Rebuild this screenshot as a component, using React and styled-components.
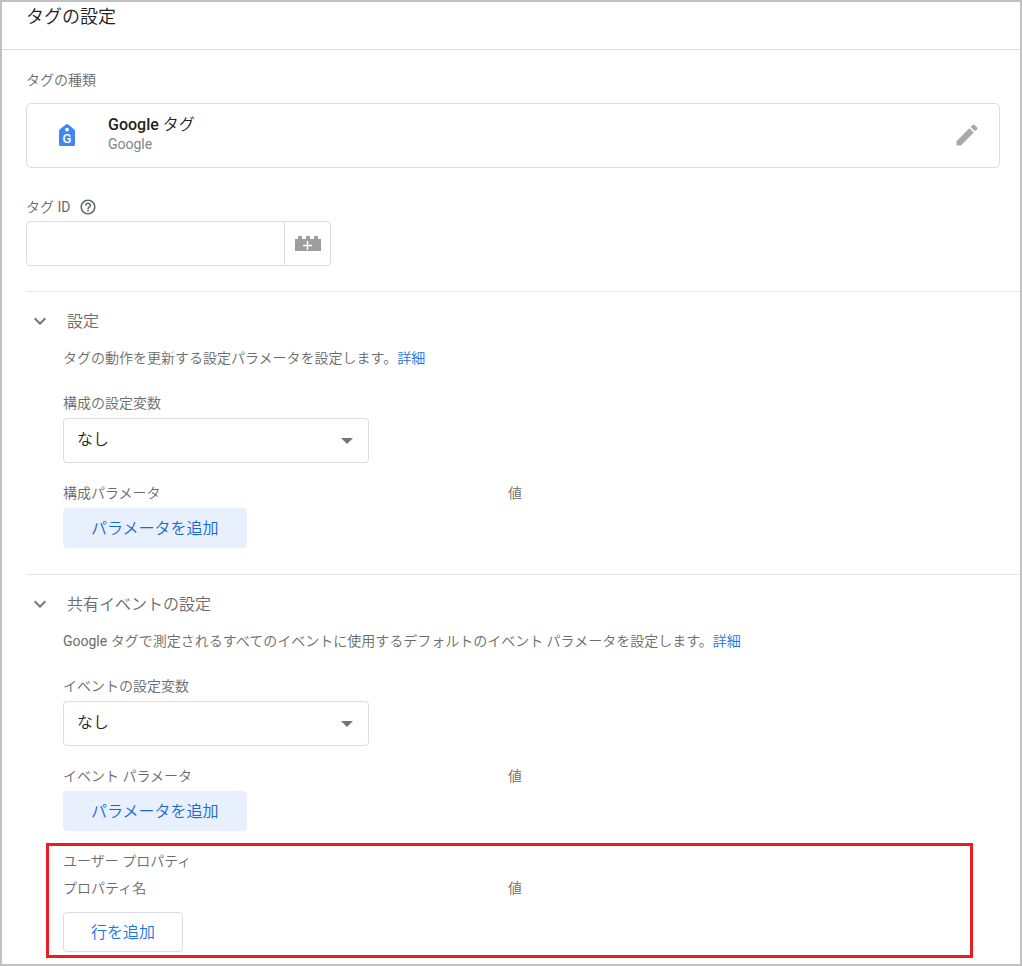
import React, { useState } from "react";
import styled, { createGlobalStyle } from "styled-components";

const VariableSelect = ({ id, label }) => {
  const [value, setValue] = useState("none");

  return (
    <>
      <Label htmlFor={id}>{label}</Label>
      <SelectWrapper>
        <Select
          id={id}
          value={value}
          onChange={(e) => setValue(e.target.value)}
        >
          <option value="none">なし</option>
        </Select>
        <SelectArrow viewBox="0 0 12 6">
          <path d="M0 0h12L6 6z" />
        </SelectArrow>
      </SelectWrapper>
    </>
  );
};

const Section = ({ title, children }) => {
  const [open, setOpen] = useState(true);

  return (
    <SectionWrapper>
      <SectionTitle>
        <SectionToggle
          aria-expanded={open}
          onClick={() => setOpen((state) => !state)}
        >
          <Chevron viewBox="0 0 24 24" $open={open}>
            <path d="M16.59 7.59 12 12.17 7.41 7.59 6 9l6 6 6-6z" />
          </Chevron>
          {title}
        </SectionToggle>
      </SectionTitle>
      {open && children}
    </SectionWrapper>
  );
};

const App = () => {
  const [tagId, setTagId] = useState("");

  return (
    <Frame>
      <GlobalStyle />
      <Header>
        <Title>タグの設定</Title>
      </Header>
      <Content>
        <TagType>
          <Caption>タグの種類</Caption>
          <TagCard>
            <TagIcon viewBox="0 0 16 22">
              <path
                fill="#4285f4"
                d="M6.8.6Q8-.4 9.2.6L15 5.200Q16 6 16 7.200V20.400Q16 22 14.400 22H1.600Q0 22 0 20.400V7.200Q0 6 1 5.200z"
              />
              <circle cx="8" cy="5.600" r="1.900" fill="#fff" />
              <text x="8" y="19" textAnchor="middle">
                G
              </text>
            </TagIcon>
            <TagText>
              <TagName>Google タグ</TagName>
              <TagVendor>Google</TagVendor>
            </TagText>
            <EditButton aria-label="編集">
              <svg viewBox="0 0 24 24" width="28" height="28">
                <path d="M3 17.250V21h3.750L17.810 9.940l-3.750-3.750L3 17.250zM20.710 7.040a.996.996 0 0 0 0-1.410l-2.340-2.340a.996.996 0 0 0-1.410 0l-1.830 1.830 3.750 3.750 1.830-1.830z" />
              </svg>
            </EditButton>
          </TagCard>
        </TagType>

        <TagIdField>
          <TagIdLabel>
            <Caption as="label" htmlFor="tag-id">
              タグ ID
            </Caption>
            <HelpButton aria-label="ヘルプ">
              <svg viewBox="0 0 24 24" width="18" height="18">
                <path d="M11 18h2v-2h-2v2zm1-16C6.480 2 2 6.480 2 12s4.480 10 10 10 10-4.480 10-10S17.520 2 12 2zm0 18c-4.410 0-8-3.590-8-8s3.590-8 8-8 8 3.590 8 8-3.590 8-8 8zm0-14c-2.210 0-4 1.790-4 4h2c0-1.100.900-2 2-2s2 .900 2 2c0 2-3 1.750-3 5h2c0-2.250 3-2.500 3-5 0-2.210-1.790-4-4-4z" />
              </svg>
            </HelpButton>
          </TagIdLabel>
          <InputGroup>
            <TextInput
              id="tag-id"
              type="text"
              value={tagId}
              onChange={(e) => setTagId(e.target.value)}
            />
            <VariableButton aria-label="変数を選択">
              <svg viewBox="0 0 26 15" width="26" height="15">
                <path
                  fill="#9e9e9e"
                  d="M0 3h3V0h4v3h4V0h4v3h4V0h4v3h3v12H0z"
                />
                <path
                  fill="none"
                  stroke="#fff"
                  strokeWidth="1.400"
                  d="M12.500 5v9M8 9.500h9"
                />
              </svg>
            </VariableButton>
          </InputGroup>
        </TagIdField>

        <Section title="設定">
          <SectionBody>
            <Description>
              タグの動作を更新する設定パラメータを設定します。
              <Link href="#config">詳細</Link>
            </Description>
            <VariableSelect id="config-variable" label="構成の設定変数" />
            <Columns>
              <span>構成パラメータ</span>
              <span>値</span>
            </Columns>
            <Button $filled>パラメータを追加</Button>
          </SectionBody>
        </Section>

        <Section title="共有イベントの設定">
          <SectionBody>
            <Description>
              Google
              タグで測定されるすべてのイベントに使用するデフォルトのイベント
              パラメータを設定します。<Link href="#event">詳細</Link>
            </Description>
            <VariableSelect id="event-variable" label="イベントの設定変数" />
            <Columns>
              <span>イベント パラメータ</span>
              <span>値</span>
            </Columns>
            <Button $filled>パラメータを追加</Button>
          </SectionBody>
          <UserProperties>
            <Caption>ユーザー プロパティ</Caption>
            <PropertyColumns>
              <span>プロパティ名</span>
              <span>値</span>
            </PropertyColumns>
            <Button>行を追加</Button>
          </UserProperties>
        </Section>
      </Content>
    </Frame>
  );
};

export default App;

const GlobalStyle = createGlobalStyle`
  * {
    box-sizing: border-box;
  }
  body {
    margin: 0;
    background-color: #fff;
    color: #6b6b6b;
    font-family: Roboto, "Noto Sans CJK JP DemiLight", "Noto Sans CJK JP Light", "Noto Sans CJK JP", sans-serif;
    font-size: 14px;
    line-height: 20px;
  }
  button, input, select {
    font-family: inherit;
    margin: 0;
  }
  svg {
    display: block;
  }
`;
const Frame = styled.div`
  min-height: 100vh;
  border: 2px solid #c1c1c1;
`;
const Header = styled.header`
  padding: 3px 24px 20px;
  border-bottom: 1px solid #dadce0;
`;
const Title = styled.h1`
  margin: 0;
  color: #212121;
  font-size: 18px;
  font-weight: 400;
  line-height: 24px;
`;
const Content = styled.main`
  padding: 20px 0 6px 24px;
`;
const Caption = styled.div`
  line-height: 20px;
`;
const TagType = styled.section`
  padding-right: 20px;
`;
const TagCard = styled.div`
  display: flex;
  align-items: center;
  min-height: 65px;
  margin-top: 13px;
  padding: 10px 18px 12px 32px;
  border: 1px solid #dadce0;
  border-radius: 5px;
`;
const TagIcon = styled.svg`
  width: 16px;
  height: 22px;
  margin-right: 33px;

  text {
    fill: #fff;
    font-size: 13px;
    font-weight: 500;
  }
`;
const TagText = styled.div`
  flex: 1;
  padding-bottom: 2px;
`;
const TagName = styled.div`
  color: #212121;
  font-size: 16px;
  font-weight: 500;
`;
const TagVendor = styled.div`
  color: #80868b;
  line-height: 18px;
`;
const IconButton = styled.button`
  padding: 0;
  border: none;
  background-color: transparent;
  cursor: pointer;
`;
const EditButton = styled(IconButton)`
  fill: #a8a8a8;
`;
const TagIdField = styled.section`
  padding: 29px 0 25px;
`;
const TagIdLabel = styled.div`
  display: flex;
  align-items: center;
  gap: 9px;
`;
const HelpButton = styled(IconButton)`
  fill: #5f6368;
`;
const InputGroup = styled.div`
  display: flex;
  width: 305px;
  height: 45px;
  margin-top: 4px;
  border: 1px solid #dadce0;
  border-radius: 4px;
`;
const TextInput = styled.input`
  flex: 1;
  min-width: 0;
  padding: 0 14px;
  border: none;
  background-color: transparent;
  color: #212121;
  font-size: 16px;
`;
const VariableButton = styled(IconButton)`
  display: flex;
  align-items: center;
  justify-content: center;
  width: 46px;
  border-left: 1px solid #dadce0;
`;
const SectionWrapper = styled.section`
  padding-top: 18px;
  border-top: 1px solid #e4e6e9;
`;
const SectionTitle = styled.h2`
  margin: 0 0 14px;
  font-size: 16px;
  font-weight: 400;
  line-height: 24px;
`;
const SectionToggle = styled(IconButton)`
  display: flex;
  align-items: center;
  gap: 15px;
  padding-left: 2px;
  color: inherit;
  font-size: inherit;
  line-height: inherit;
`;
const Chevron = styled.svg`
  width: 24px;
  height: 24px;
  fill: #757575;
  transform: ${(props) => (props.$open ? "none" : "rotate(-90deg)")};
`;
const SectionBody = styled.div`
  padding: 0 20px 26px 37px;

  &:not(:last-child) {
    padding-bottom: 12px;
  }
`;
const Description = styled.p`
  margin: 0 0 25px;
`;
const Link = styled.a`
  color: #1a73e8;
  text-decoration: none;
`;
const Label = styled.label`
  display: block;
`;
const SelectWrapper = styled.div`
  position: relative;
  width: 306px;
  margin: 5px 0 20px;
`;
const Select = styled.select`
  appearance: none;
  display: block;
  width: 100%;
  height: 45px;
  padding: 0 40px 2px 13px;
  border: 1px solid #dadce0;
  border-radius: 4px;
  background-color: transparent;
  color: #212121;
  font-size: 16px;
`;
const SelectArrow = styled.svg`
  position: absolute;
  top: 20px;
  right: 16px;
  width: 12px;
  height: 6px;
  fill: #757575;
  pointer-events: none;
`;
const Columns = styled.div`
  display: grid;
  grid-template-columns: 445px 1fr;
  margin-bottom: 5px;
`;
const PropertyColumns = styled(Columns)`
  margin: 7px 0 14px;
`;
const Button = styled.button`
  display: block;
  height: 40px;
  padding: 0 27px 2px;
  border: 1px solid ${(props) => (props.$filled ? "#e8f0fe" : "#dadce0")};
  border-radius: 4px;
  background-color: ${(props) => (props.$filled ? "#e8f0fe" : "#fff")};
  color: ${(props) => (props.$filled ? "#1967d2" : "#1a73e8")};
  font-size: 16px;
  cursor: pointer;
`;
const UserProperties = styled.div`
  margin: 0 47px 0 20px;
  padding: 5px 14px 3px;
  border: 3px solid #ed1c24;
`;
